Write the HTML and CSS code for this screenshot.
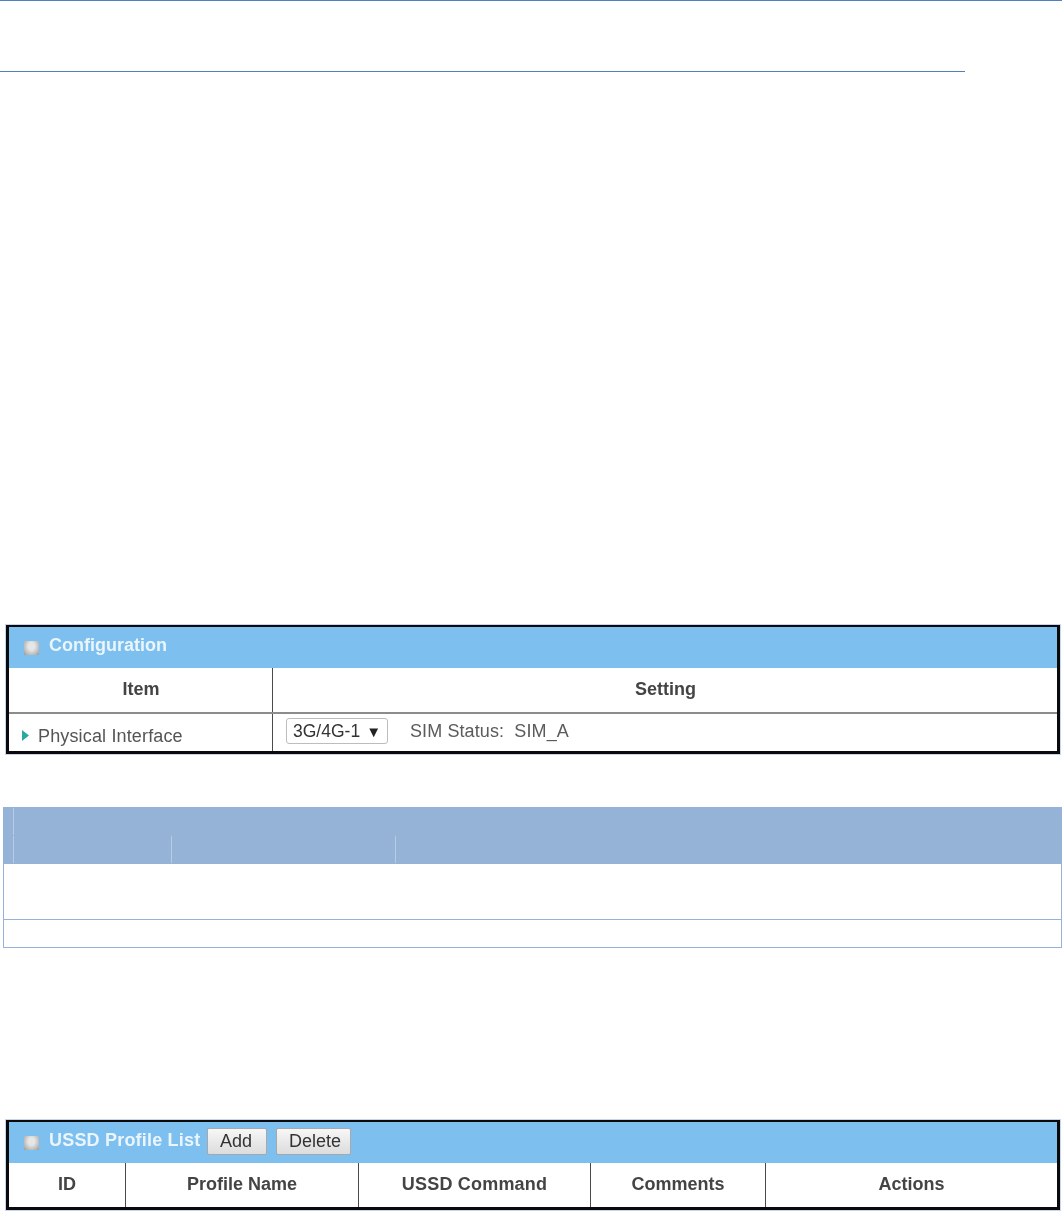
FILE: index.html
```html
<!DOCTYPE html>
<html lang="en">
<head>
<meta charset="utf-8">
<title>USSD Configuration</title>
<link rel="stylesheet" href="styles.css">
</head>
<body>
<div class="top-rule"></div>
<div class="head-rule"></div>

<section class="panel panel-config">
  <div class="panel-inner">
    <div class="bar">
      <span class="bullet"></span>
      <span class="bar-title">Configuration</span>
    </div>
    <div class="row row-head config-cols">
      <div class="cell th">Item</div>
      <div class="cell th">Setting</div>
    </div>
    <div class="row row-body config-cols">
      <div class="cell label">
        <svg class="arrow" viewBox="0 0 7 11" width="7" height="11"><path d="M0 0L7 5.5L0 11Z" fill="#2aa9a0"/></svg>
        <span class="label-text">Physical Interface</span>
      </div>
      <div class="cell setting">
        <span class="select">3G/4G-1<span class="caret">▼</span></span>
        <span class="sim">SIM Status:&nbsp; SIM_A</span>
      </div>
    </div>
  </div>
</section>

<section class="doc-table">
  <div class="doc-head">
    <div class="doc-head-top"><span class="sep"></span></div>
    <div class="doc-head-bottom">
      <span class="sep sep-a"></span>
      <span class="sep sep-b"></span>
      <span class="sep sep-c"></span>
    </div>
  </div>
  <div class="doc-row doc-row-tall"></div>
  <div class="doc-row doc-row-short"></div>
</section>

<section class="panel panel-list">
  <div class="panel-inner">
    <div class="bar">
      <span class="bullet"></span>
      <span class="bar-title bar-title-list">USSD Profile List</span>
      <span class="btn btn-add">Add</span>
      <span class="btn btn-del">Delete</span>
    </div>
    <div class="row row-list list-cols">
      <div class="cell th">ID</div>
      <div class="cell th">Profile Name</div>
      <div class="cell th th-wide">USSD Command</div>
      <div class="cell th">Comments</div>
      <div class="cell th">Actions</div>
    </div>
  </div>
</section>
</body>
</html>
```
FILE: styles.css
```css
* { box-sizing: border-box; }
html, body { margin: 0; padding: 0; background: #fff; }
body {
  width: 1062px;
  height: 1212px;
  overflow: hidden;
  font-family: "Liberation Sans", Arial, sans-serif;
  color: #3c3c3c;
}
.top-rule { height: 1px; background: #4f81bd; }
.head-rule { width: 965px; height: 1px; margin-top: 70px; background: #4f81bd; }

.panel {
  width: 1056px;
  margin-left: 5px;
  border: 1px solid #c6d6f2;
  filter: blur(0.35px);
}
.panel-inner {
  border: 3px solid #0a0a0a;
  border-top-width: 2px;
}
.panel-config { margin-top: 552px; height: 131px; }
.panel-list { margin-top: 171px; height: 92px; }

.bar {
  display: flex;
  align-items: center;
  height: 41px;
  padding-left: 15px;
  background: #7dbfee;
}
.bullet {
  width: 15px;
  height: 14px;
  margin-top: 1px;
  background: radial-gradient(ellipse at 50% 38%, #e6e6e6 0 30%, #bcbcbc 70%, #9a9a9a 100%);
}
.bar-title {
  margin-left: 10px;
  padding-bottom: 4px;
  font-size: 18px;
  font-weight: 700;
  color: #eaf5fd;
}
.bar-title-list { letter-spacing: 0.2px; }

.row { display: grid; }
.config-cols { grid-template-columns: 263px 1fr; }
.list-cols { grid-template-columns: 116px 233px 232px 175px 1fr; }
.row-head { height: 46px; border-bottom: 2px solid #8c8c8c; }
.row-body { height: 37px; }
.row-list { height: 44px; }

.cell {
  display: flex;
  align-items: center;
  border-left: 1px solid #4a4a4a;
  font-size: 18px;
}
.cell:first-child { border-left: 0; }
.th { justify-content: center; padding-bottom: 2px; font-weight: 700; color: #444; }
.row-head .th { padding-bottom: 1px; padding-left: 1px; }
.th-wide { letter-spacing: 0.2px; }

.label { padding: 0 0 0 13px; gap: 9px; color: #555; }
.label-text { padding-top: 8px; letter-spacing: 0.15px; }
.arrow { flex: none; margin-top: 6px; }

.setting { padding: 0 0 3px 13px; color: #5b5b5b; }
.select {
  display: inline-flex;
  align-items: center;
  justify-content: space-between;
  width: 102px;
  height: 26px;
  padding: 0 6px;
  border: 1px solid #bdbdbd;
  border-radius: 3px;
  background: #fff;
  color: #333;
  font-size: 17.5px;
}
.caret { font-size: 15px; color: #222; }
.sim { margin-left: 22px; letter-spacing: 0.1px; }

.btn {
  display: flex;
  align-items: center;
  justify-content: center;
  height: 27px;
  margin-top: -3px;
  border: 1px solid #a8a8a8;
  border-radius: 2px;
  background: linear-gradient(#f7f7f7, #dcdcdc);
  color: #333;
  font-size: 18px;
}
.btn-add { width: 60px; margin-left: 7px; padding-right: 3px; }
.btn-del { width: 75px; margin-left: 9px; padding-left: 2px; }

.doc-table { width: 1059px; margin: 52px 0 0 3px; }
.doc-head { height: 57px; padding-top: 1px; background: #95b3d7; }
.doc-head-top { position: relative; height: 28px; }
.doc-head-bottom { position: relative; height: 28px; }
.sep { position: absolute; top: 0; width: 1px; height: 27px; background: #b8cce4; }
.doc-head-top .sep { left: 10px; }
.sep-a { left: 10px; }
.sep-b { left: 168px; }
.sep-c { left: 392px; }
.doc-row {
  border-left: 1px solid #95b3d7;
  border-right: 1px solid #95b3d7;
  border-bottom: 1px solid #95b3d7;
  width: 1059px;
}
.doc-row-tall { height: 56px; }
.doc-row-short { height: 28px; }
```
